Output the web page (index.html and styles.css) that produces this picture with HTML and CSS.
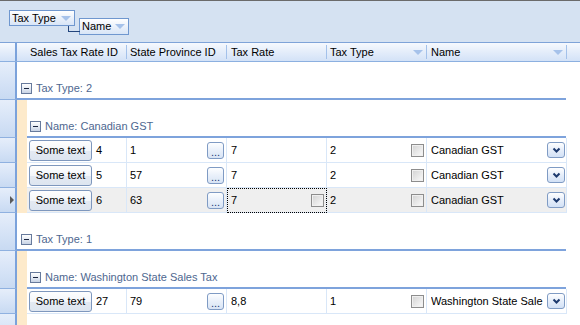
FILE: index.html
```html
<!DOCTYPE html>
<html lang="en">
<head>
    <meta charset="UTF-8">
    <title>Sales Tax Rates</title>
    <link rel="stylesheet" href="styles.css">
</head>
<body>
    <div class="grid">
        <!-- group by panel -->
        <div class="panel">
            <div class="chip chip-type">Tax Type<i class="arrow"></i></div>
            <div class="chip chip-name">Name<i class="arrow"></i></div>
        </div>

        <!-- column headers -->
        <div class="head">
            <div class="rh"></div>
            <div class="hc h0">Sales Tax Rate ID</div><i class="sep"></i>
            <div class="hc h1">State Province ID</div><i class="sep"></i>
            <div class="hc h2">Tax Rate</div><i class="sep"></i>
            <div class="hc h3">Tax Type<i class="arrow"></i></div><i class="sep"></i>
            <div class="hc h4">Name<i class="arrow"></i></div><i class="sep"></i>
        </div>

        <div class="row grp-type">
            <div class="rh"></div>
            <div class="glabel"><span class="toggle"></span>Tax Type: 2</div>
        </div>
        <div class="row grp-name">
            <div class="rh"></div>
            <div class="indent"></div>
            <div class="glabel"><span class="toggle"></span>Name: Canadian GST</div>
        </div>
        <div class="row data">
            <div class="rh"></div>
            <div class="indent"></div>
            <div class="cell c0"><button class="btn">Some text</button>4</div>
            <div class="cell c1">1<span class="dots">...</span></div>
            <div class="cell c2">7</div>
            <div class="cell c3">2<span class="check"></span></div>
            <div class="cell c4"><span class="txt">Canadian GST</span><span class="combo"><svg width="9" height="6" viewBox="0 0 9 6"><path d="M1.5 1.5 L4.5 4.5 L7.5 1.5" fill="none" stroke="#1d3a6e" stroke-width="2"/></svg></span></div>
        </div>
        <div class="row data">
            <div class="rh"></div>
            <div class="indent"></div>
            <div class="cell c0"><button class="btn">Some text</button>5</div>
            <div class="cell c1">57<span class="dots">...</span></div>
            <div class="cell c2">7</div>
            <div class="cell c3">2<span class="check"></span></div>
            <div class="cell c4"><span class="txt">Canadian GST</span><span class="combo"><svg width="9" height="6" viewBox="0 0 9 6"><path d="M1.5 1.5 L4.5 4.5 L7.5 1.5" fill="none" stroke="#1d3a6e" stroke-width="2"/></svg></span></div>
        </div>
        <div class="row data current">
            <div class="rh"><i class="pointer"></i></div>
            <div class="indent"></div>
            <div class="cell c0"><button class="btn">Some text</button>6</div>
            <div class="cell c1">63<span class="dots">...</span></div>
            <div class="cell c2 focus">7<span class="check"></span></div>
            <div class="cell c3">2<span class="check"></span></div>
            <div class="cell c4"><span class="txt">Canadian GST</span><span class="combo"><svg width="9" height="6" viewBox="0 0 9 6"><path d="M1.5 1.5 L4.5 4.5 L7.5 1.5" fill="none" stroke="#1d3a6e" stroke-width="2"/></svg></span></div>
        </div>

        <div class="row grp-type">
            <div class="rh"></div>
            <div class="glabel"><span class="toggle"></span>Tax Type: 1</div>
        </div>
        <div class="row grp-name">
            <div class="rh"></div>
            <div class="indent"></div>
            <div class="glabel"><span class="toggle"></span>Name: Washington State Sales Tax</div>
        </div>
        <div class="row data">
            <div class="rh"></div>
            <div class="indent"></div>
            <div class="cell c0"><button class="btn">Some text</button>27</div>
            <div class="cell c1">79<span class="dots">...</span></div>
            <div class="cell c2">8,8</div>
            <div class="cell c3">1<span class="check"></span></div>
            <div class="cell c4"><span class="txt">Washington State Sale</span><span class="combo"><svg width="9" height="6" viewBox="0 0 9 6"><path d="M1.5 1.5 L4.5 4.5 L7.5 1.5" fill="none" stroke="#1d3a6e" stroke-width="2"/></svg></span></div>
        </div>
        <div class="row filler">
            <div class="rh"></div>
            <div class="indent"></div>
        </div>
    </div>
</body>
</html>
```

FILE: styles.css
```css
body {
    margin: 0;
    font-family: "Liberation Sans", Arial, sans-serif;
    font-size: 11px;
    color: #000;
    background: #fff;
    overflow: hidden;
}

.grid {
    width: 580px;
    height: 325px;
    overflow: hidden;
}

/* group by panel */
.panel {
    height: 41px;
    box-sizing: content-box;
    border-top: 1px solid #6b6b6b;
    border-bottom: 1px solid #7ea3d8;
    background: #d5e2f2;
    display: flex;
    align-items: flex-start;
    gap: 4px;
    padding-left: 9px;
}

.chip {
    position: relative;
    display: flex;
    align-items: center;
    justify-content: space-between;
    box-sizing: border-box;
    border: 1px solid #6f97cf;
    background: linear-gradient(#ffffff, #e9f0fa 55%, #d8e5f7);
    padding: 0 3px 0 2px;
    line-height: 13px;
}

.chip-type {
    width: 66px;
    height: 16px;
    margin-top: 9px;
}

.chip-name {
    width: 50px;
    height: 17px;
    margin-top: 17px;
}

/* connector from parent group chip */
.chip-name::before {
    content: "";
    position: absolute;
    left: -12px;
    top: 7px;
    width: 11px;
    height: 5px;
    border-left: 1px solid #23457d;
    border-bottom: 1px solid #23457d;
}

.arrow {
    width: 0;
    height: 0;
    border-left: 5px solid transparent;
    border-right: 5px solid transparent;
    border-top: 5px solid #a6c2ea;
}

/* column headers */
.head {
    display: flex;
    align-items: center;
    height: 19px;
    box-sizing: border-box;
    border-bottom: 1px solid #8cb0e0;
    background: linear-gradient(#f6f9fe, #e4edfa 50%, #d3e2f7);
}

.head .rh {
    height: 18px;
    border-bottom: none;
    background: transparent;
}

.hc {
    box-sizing: border-box;
    padding-left: 4px;
    padding-right: 3px;
    display: flex;
    align-items: center;
    justify-content: space-between;
    white-space: nowrap;
}

.h0 { width: 109px; padding-left: 13px; }
.h1 { width: 99px; padding-left: 3px; }
.h2 { width: 99px; }
.h3 { width: 99px; padding-left: 3px; }
.h4 { width: 139px; }

.sep {
    width: 1px;
    height: 14px;
    background: #a3c1ea;
}

/* rows */
.row {
    display: flex;
}

.rh {
    width: 15px;
    flex: none;
    border-right: 2px solid #7ba2db;
    border-bottom: 1px solid #8fb1e0;
    background: linear-gradient(#e6eefa, #d4e2f6 60%, #c8daf2);
    display: flex;
    align-items: center;
}

.indent {
    width: 10px;
    flex: none;
    background: #fdeacb;
}

.grp-type,
.grp-name {
    height: 38px;
}

.glabel {
    box-sizing: border-box;
    display: flex;
    align-items: flex-end;
    padding: 0 0 3px 4px;
    border-bottom: 2px solid #7ea3dc;
    color: #4e6790;
    line-height: 13px;
}

.glabel .toggle {
    margin-bottom: 1px;
}

.grp-type .glabel { width: 549px; }
.grp-name .glabel { width: 539px; padding-left: 3px; }

.toggle {
    position: relative;
    width: 9px;
    height: 9px;
    margin-right: 4px;
    border: 1px solid #677a9c;
    background: linear-gradient(#ffffff, #dfe6f1 60%, #c8d3e5);
    box-sizing: content-box;
}

.toggle::after {
    content: "";
    position: absolute;
    left: 2px;
    top: 4px;
    width: 5px;
    height: 1px;
    background: #1b2640;
}

.data {
    height: 25px;
}

.cell {
    box-sizing: border-box;
    height: 25px;
    border-right: 1px solid #d9e7f8;
    border-bottom: 1px solid #d9e7f8;
    display: flex;
    align-items: center;
    justify-content: space-between;
    padding: 0 2px 0 3px;
    white-space: nowrap;
}

.c0 { width: 100px; justify-content: flex-start; padding-left: 2px; }
.c1 { width: 100px; }
.c2 { width: 100px; padding-left: 4px; }
.c3 { width: 100px; }
.c4 { width: 140px; padding-left: 4px; padding-right: 1px; }

.current .cell {
    background: #efefef;
}

.focus {
    outline: 1px dotted #000;
    outline-offset: -1px;
}

.pointer {
    margin-left: 10px;
    width: 0;
    height: 0;
    border-top: 4px solid transparent;
    border-bottom: 4px solid transparent;
    border-left: 4px solid #5a5a5a;
}

.btn {
    width: 63px;
    height: 21px;
    margin: 0 4px 0 0;
    padding: 0;
    font: inherit;
    color: #000;
    border: 1px solid #7e97bd;
    border-radius: 3px;
    background: linear-gradient(#fefefe, #f3f6fa 50%, #e3e9f2 55%, #dde5f0);
}

.dots {
    width: 17px;
    height: 17px;
    box-sizing: border-box;
    border: 1px solid #7f9bc4;
    border-radius: 3px;
    background: linear-gradient(#fdfeff, #e9f0fa 50%, #d8e4f5);
    color: #1c3d78;
    text-align: center;
    line-height: 19px;
    font-size: 11px;
}

.check {
    width: 13px;
    height: 13px;
    box-sizing: border-box;
    border: 1px solid #8d8d8d;
    box-shadow: inset 0 0 0 1px #f0f0f0;
    background: linear-gradient(135deg, #d2d2d2, #f3f3f3 80%);
}

.txt {
    overflow: hidden;
    width: 115px;
}

.combo {
    width: 18px;
    height: 16px;
    box-sizing: border-box;
    border: 1px solid #7f9bc4;
    border-radius: 3px;
    background: linear-gradient(#ffffff, #e6eefa 50%, #d2e1f6);
    display: flex;
    align-items: center;
    justify-content: center;
}

.filler {
    height: 30px;
}

.filler .rh {
    border-bottom: none;
}
```
